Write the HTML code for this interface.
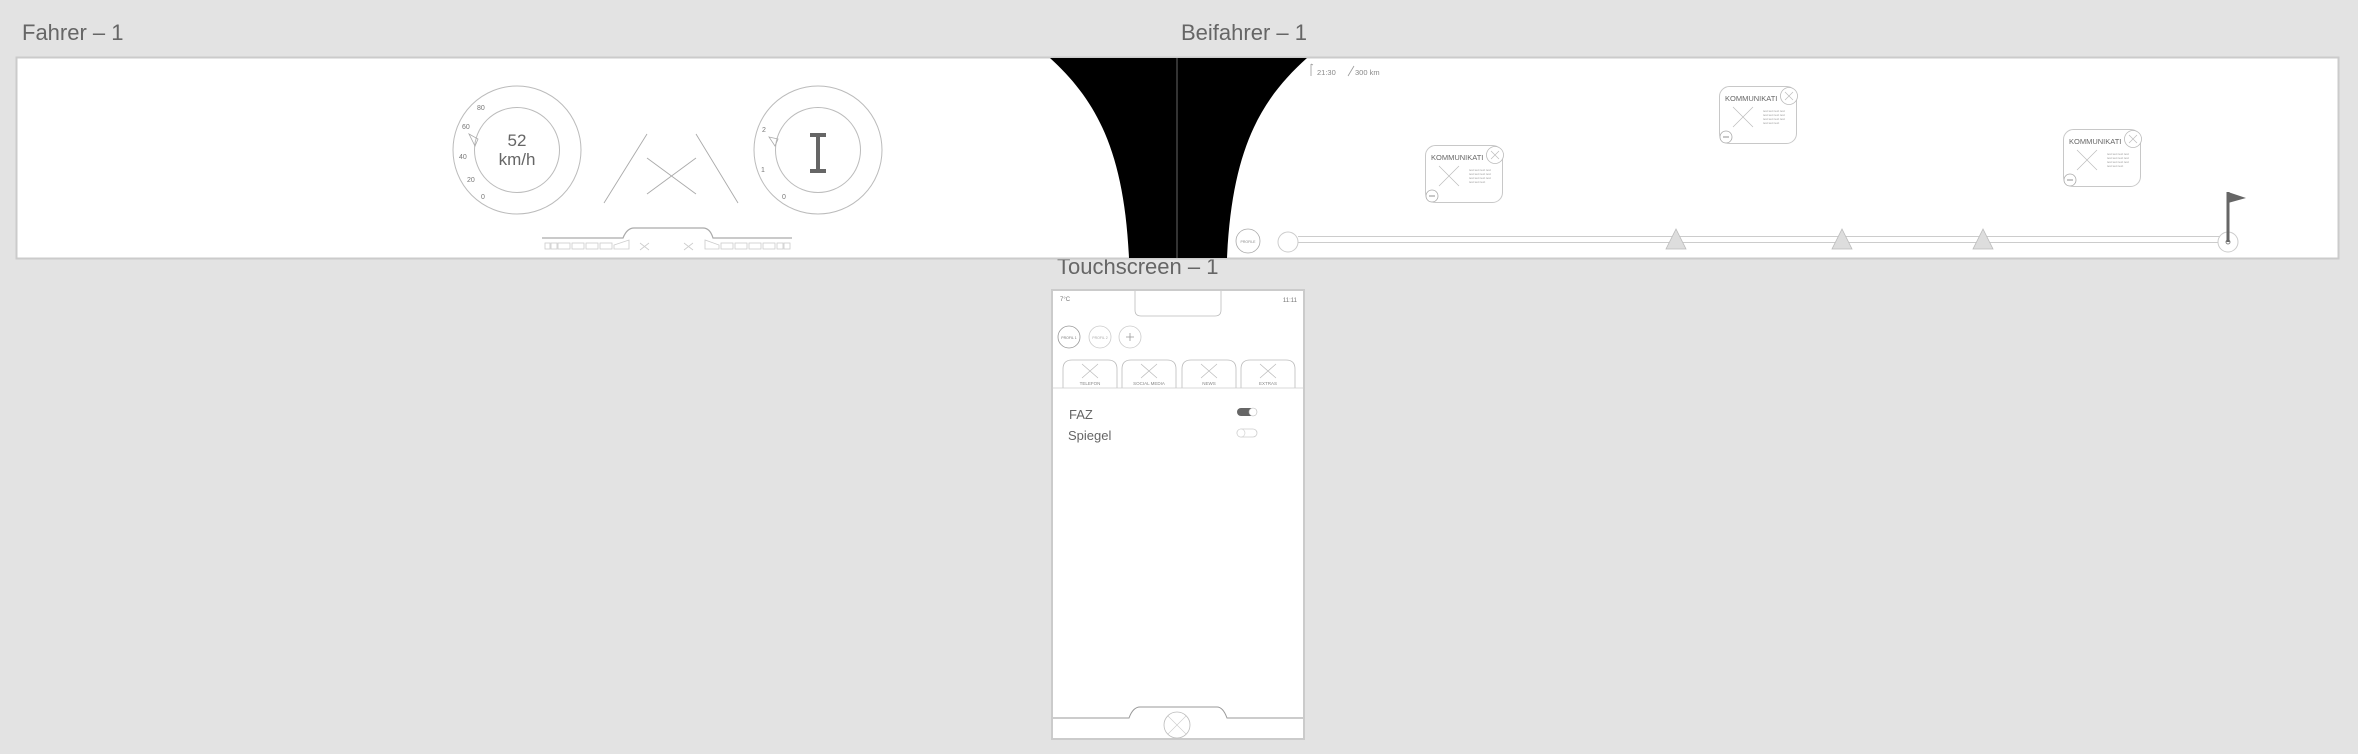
<!DOCTYPE html>
<html><head><meta charset="utf-8"><style>
html,body{margin:0;padding:0;background:#e3e3e3;width:2358px;height:754px;overflow:hidden}
svg{display:block}
text{font-family:"Liberation Sans",sans-serif}
</style></head><body>
<svg width="2358" height="754" viewBox="0 0 2358 754" xmlns="http://www.w3.org/2000/svg">
<defs>
<g id="card">
 <rect x="0.5" y="0.5" width="77" height="57" rx="10" fill="#fff" stroke="#c8c8c8"/>
 <text x="6" y="15" font-size="7.5" fill="#666">KOMMUNIKATI</text>
 <circle cx="70" cy="10" r="8.5" fill="#fff" stroke="#bbb" stroke-width="0.8"/>
 <path d="M66 6L74 14M74 6L66 14" stroke="#bbb" stroke-width="0.7"/>
 <path d="M14 21L34 41M34 21L14 41" stroke="#bbb" stroke-width="0.7"/>
 <g fill="#999" font-size="3"><text x="44" y="26">text text text text</text><text x="44" y="30">text text text text</text><text x="44" y="34">text text text text</text><text x="44" y="38">text text text</text></g>
 <circle cx="7" cy="51" r="6" fill="#fff" stroke="#aaa" stroke-width="0.8"/>
 <path d="M4 51H10" stroke="#777" stroke-width="0.8"/>
</g>
<g id="tab">
 <path d="M0 28V9Q0 0 9 0H45Q54 0 54 9V28" fill="#fff" stroke="#bbb" stroke-width="0.8"/>
 <path d="M19 4L35 18M35 4L19 18" stroke="#bbb" stroke-width="0.7"/>
</g>
</defs>
<text x="22" y="40" font-size="22" fill="#666">Fahrer – 1</text>
<text x="1181" y="40" font-size="22" fill="#666">Beifahrer – 1</text>
<text x="1057" y="274" font-size="22" fill="#666">Touchscreen – 1</text>

<rect x="16.5" y="57.5" width="2322" height="201" fill="#fff" stroke="#cbcbcb" stroke-width="2"/>

<circle cx="517" cy="150" r="64" fill="none" stroke="#bbb"/>
<circle cx="517" cy="150" r="42.5" fill="none" stroke="#bbb"/>
<g font-size="7" fill="#777">
<text x="477" y="110">80</text><text x="462" y="129">60</text><text x="459" y="159">40</text><text x="467" y="182">20</text><text x="481" y="199">0</text>
</g>
<path d="M469 134L478 139L475 146Z" fill="none" stroke="#aaa" stroke-width="0.8"/>
<text x="517" y="146" font-size="17" fill="#666" text-anchor="middle">52</text>
<text x="517" y="165" font-size="17" fill="#666" text-anchor="middle">km/h</text>
<circle cx="818" cy="150" r="64" fill="none" stroke="#bbb"/>
<circle cx="818" cy="150" r="42.5" fill="none" stroke="#bbb"/>
<g font-size="7" fill="#777"><text x="762" y="132">2</text><text x="761" y="172">1</text><text x="782" y="199">0</text></g>
<path d="M769 137L778 139L775 146Z" fill="none" stroke="#aaa" stroke-width="0.8"/>
<path d="M810 135H826M818 135V171M810 171H826" stroke="#666" stroke-width="4"/>
<path d="M604 203L647 134M696 134L738 203M647 158L696 194M647 194L696 158" stroke="#aaa" stroke-width="0.9"/>
<path d="M542 238H623Q627 228 634 228H703Q710 228 713 238H792" fill="none" stroke="#aaa" stroke-width="1.2"/>
<g fill="none" stroke="#ccc" stroke-width="0.8">
<rect x="545" y="243" width="5" height="6"/><rect x="551" y="243" width="6" height="6"/><rect x="558" y="243" width="12" height="6"/><rect x="572" y="243" width="12" height="6"/><rect x="586" y="243" width="12" height="6"/><rect x="600" y="243" width="12" height="6"/>
<path d="M614 249V245L629 240V249Z"/><path d="M640 243L649 250M649 243L640 250"/>
<path d="M684 243L693 250M693 243L684 250"/><path d="M705 249V240L719 245V249Z"/>
<rect x="721" y="243" width="12" height="6"/><rect x="735" y="243" width="12" height="6"/><rect x="749" y="243" width="12" height="6"/><rect x="763" y="243" width="12" height="6"/><rect x="777" y="243" width="6" height="6"/><rect x="784" y="243" width="6" height="6"/>
</g>

<path d="M1050 58H1307C1260 100 1232 150 1227 258H1129C1124 150 1096 100 1050 58Z" fill="#000"/>
<path d="M1177 58V258" stroke="#666" stroke-width="1"/>

<path d="M1311 64V76M1311 64L1313 65" stroke="#999" stroke-width="0.8" fill="none"/>
<text x="1317" y="75" font-size="7.5" fill="#888">21:30</text>
<path d="M1348 76L1354 66" stroke="#999" stroke-width="0.8"/>
<text x="1355" y="75" font-size="7.5" fill="#888">300 km</text>
<circle cx="1248" cy="241" r="12" fill="#fff" stroke="#aaa" stroke-width="0.8"/>
<text x="1248" y="243" font-size="3.5" fill="#888" text-anchor="middle">PROFILE</text>
<path d="M1298 236.5H2220M1298 242.5H2220" stroke="#ccc" stroke-width="1"/>
<circle cx="1288" cy="242" r="10" fill="#fff" stroke="#ccc"/>
<g fill="#ddd" stroke="#bbb" stroke-width="0.8">
<path d="M1676 229L1666 249H1686Z"/><path d="M1842 229L1832 249H1852Z"/><path d="M1983 229L1973 249H1993Z"/>
</g>
<circle cx="2228" cy="242" r="10" fill="#fff" stroke="#ccc"/>
<circle cx="2228" cy="242" r="2" fill="none" stroke="#888"/>
<path d="M2228 192V242" stroke="#666" stroke-width="3"/>
<path d="M2228 192L2246 198L2228 203Z" fill="#666"/>
<use href="#card" x="1425" y="145"/>
<use href="#card" x="1719" y="86"/>
<use href="#card" x="2063" y="129"/>

<rect x="1052" y="290" width="252" height="449" fill="#fff" stroke="#cbcbcb" stroke-width="2"/>
<path d="M1135 291V310Q1135 316 1141 316H1215Q1221 316 1221 310V291" fill="none" stroke="#bbb" stroke-width="0.8"/>
<text x="1060" y="301" font-size="6" fill="#777">7°C</text>
<text x="1297" y="302" font-size="6" fill="#777" text-anchor="end">11:11</text>
<circle cx="1069" cy="337" r="11" fill="none" stroke="#999" stroke-width="0.8"/>
<text x="1069" y="339" font-size="3.5" fill="#777" text-anchor="middle">PROFIL 1</text>
<circle cx="1100" cy="337" r="11" fill="none" stroke="#ccc" stroke-width="0.8"/>
<text x="1100" y="339" font-size="3.5" fill="#aaa" text-anchor="middle">PROFIL 2</text>
<circle cx="1130" cy="337" r="11" fill="none" stroke="#ccc" stroke-width="0.8"/>
<path d="M1126 337H1134M1130 333V341" stroke="#999" stroke-width="0.8"/>
<use href="#tab" x="1063" y="360"/>
<use href="#tab" x="1122" y="360"/>
<use href="#tab" x="1182" y="360"/>
<use href="#tab" x="1241" y="360"/>
<path d="M1052 388H1304" stroke="#ccc" stroke-width="0.8"/>
<g font-size="4.5" fill="#888" text-anchor="middle"><text x="1090" y="385">TELEFON</text><text x="1149" y="385">SOCIAL MEDIA</text><text x="1209" y="385">NEWS</text><text x="1268" y="385">EXTRAS</text></g>
<text x="1069" y="419" font-size="13" fill="#666">FAZ</text>
<text x="1068" y="440" font-size="13" fill="#666">Spiegel</text>
<rect x="1237" y="408" width="20" height="8" rx="4" fill="#666"/>
<circle cx="1253" cy="412" r="4" fill="#fff" stroke="#bbb" stroke-width="0.6"/>
<rect x="1237" y="429" width="20" height="8" rx="4" fill="#fff" stroke="#ccc" stroke-width="0.8"/>
<circle cx="1241" cy="433" r="4" fill="#fff" stroke="#ccc" stroke-width="0.6"/>
<path d="M1053 718H1129Q1133 707 1140 707H1217Q1223 707 1227 718H1303" fill="none" stroke="#999" stroke-width="1"/>
<circle cx="1177" cy="725" r="13" fill="none" stroke="#bbb" stroke-width="0.8"/>
<path d="M1168 716L1186 734M1186 716L1168 734" stroke="#ccc" stroke-width="0.6"/>
</svg>
</body></html>
